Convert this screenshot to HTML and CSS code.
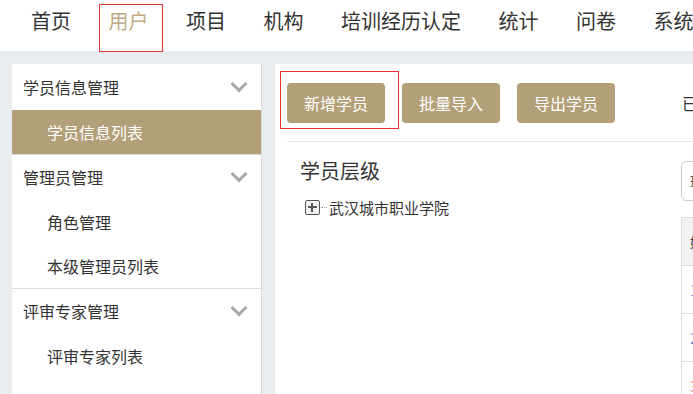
FILE: index.html
```html
<!DOCTYPE html>
<html lang="zh-CN">
<head>
    <meta charset="UTF-8">
    <meta name="viewport" content="width=device-width, initial-scale=1.0">
    <title>学员信息列表</title>
    <link rel="stylesheet" href="styles.css">
</head>
<body>
    <nav class="topnav">
        <a href="#">首页</a>
        <a href="#" class="current marked">用户</a>
        <a href="#">项目</a>
        <a href="#">机构</a>
        <a href="#">培训经历认定</a>
        <a href="#">统计</a>
        <a href="#">问卷</a>
        <a href="#">系统设置</a>
    </nav>

    <div class="layout">
        <aside class="sidebar">
            <div class="menu-group">
                <div class="menu-title">学员信息管理<span class="chevron"></span></div>
                <a href="#" class="menu-item active">学员信息列表</a>
            </div>
            <div class="menu-group">
                <div class="menu-title">管理员管理<span class="chevron"></span></div>
                <a href="#" class="menu-item">角色管理</a>
                <a href="#" class="menu-item">本级管理员列表</a>
            </div>
            <div class="menu-group">
                <div class="menu-title">评审专家管理<span class="chevron"></span></div>
                <a href="#" class="menu-item">评审专家列表</a>
            </div>
        </aside>

        <main class="main">
            <div class="toolbar">
                <button class="btn marked">新增学员</button>
                <button class="btn">批量导入</button>
                <button class="btn">导出学员</button>
                <span class="selected-info">已选择 0 名学员</span>
            </div>

            <div class="content">
                <section class="tree-panel">
                    <h2 class="panel-title">学员层级</h2>
                    <div class="tree-node">
                        <span class="toggle"></span>
                        <span class="connector"></span>
                        <span class="node-label">武汉城市职业学院</span>
                    </div>
                </section>

                <section class="list-panel">
                    <input type="text" class="search" placeholder="班级/姓名/身份证号">
                    <table class="student-table">
                        <thead>
                            <tr><th>姓名</th><th>性别</th><th>身份证号</th><th>所属机构</th></tr>
                        </thead>
                        <tbody>
                            <tr><td class="link">1</td><td>张三</td><td>男</td><td>武汉城市职业学院</td></tr>
                            <tr><td class="link">2</td><td>李四</td><td>女</td><td>武汉城市职业学院</td></tr>
                            <tr><td class="warn">3</td><td>王五</td><td>男</td><td>武汉城市职业学院</td></tr>
                        </tbody>
                    </table>
                </section>
            </div>
        </main>
    </div>
</body>
</html>
```

FILE: styles.css
```css
html, body {
    margin: 0;
    height: 100%;
}
body {
    background-color: #eaedf0;
    font-family: "Noto Sans CJK SC", "Noto Sans", sans-serif;
    color: #333;
    overflow: hidden;
}
a {
    text-decoration: none;
    color: inherit;
}

/* top navigation */
.topnav {
    display: flex;
    gap: 37.5px;
    height: 51px;
    box-sizing: border-box;
    padding: 3px 0 0 31px;
    background-color: #fff;
    white-space: nowrap;
}
.topnav a {
    flex-shrink: 0;
    font-size: 20px;
    line-height: 35px;
    color: #333;
}
.topnav a.current {
    color: #c2aa86;
}
.marked {
    position: relative;
}
.topnav a.marked::after {
    content: "";
    position: absolute;
    top: 1px;
    bottom: -1px;
    left: -10px;
    right: -14px;
    border: 1px solid #e8322f;
}

/* page layout */
.layout {
    display: flex;
    gap: 13px;
    padding: 13px 0 0 12px;
    height: calc(100% - 51px);
    box-sizing: border-box;
}
.sidebar {
    width: 249px;
    flex-shrink: 0;
    background-color: #fff;
    border-right: 1px solid #d6dade;
}
.menu-group {
    border-top: 1px solid #dcdcdc;
}
.menu-group:first-child {
    border-top-color: #fff;
}
.menu-title {
    display: flex;
    justify-content: space-between;
    align-items: center;
    height: 45px;
    box-sizing: border-box;
    padding: 0 12px 2px 11px;
    font-size: 16px;
}
.chevron {
    width: 9px;
    height: 9px;
    margin: -5px 4px 0 0;
    border-right: 3px solid #a8a8a8;
    border-bottom: 3px solid #a8a8a8;
    transform: rotate(45deg);
}
.menu-item {
    display: block;
    height: 44px;
    line-height: 44px;
    padding-left: 35px;
    font-size: 16px;
}
.menu-item.active {
    background-color: #b39f78;
    color: #fff;
}

/* main panel */
.main {
    flex: 1;
    min-width: 0;
    background-color: #fff;
}
.toolbar {
    display: flex;
    align-items: center;
    height: 77px;
    box-sizing: border-box;
    padding: 0 0 0 12px;
    white-space: nowrap;
}
.btn {
    flex-shrink: 0;
    width: 98px;
    height: 40px;
    margin: 0 17px 0 0;
    padding: 0;
    border: none;
    border-radius: 4px;
    background-color: #b39f78;
    color: #fff;
    font-family: inherit;
    font-size: 16px;
    cursor: pointer;
}
.btn.marked::after {
    content: "";
    position: absolute;
    top: -12px;
    bottom: -6px;
    left: -7px;
    right: -14px;
    border: 1px solid #e8322f;
}
.selected-info {
    flex-shrink: 0;
    margin-left: 50px;
    font-size: 16px;
}

.content {
    display: flex;
    margin-left: 12px;
    border-top: 1px solid #e5e5e5;
}
.tree-panel {
    width: 381px;
    flex-shrink: 0;
    padding: 17px 0 0 13px;
}
.panel-title {
    margin: 0;
    font-size: 20px;
    font-weight: normal;
    line-height: 24px;
}
.tree-node {
    display: flex;
    align-items: center;
    margin: 9px 0 0 5px;
    height: 30px;
    font-size: 15px;
}
.toggle {
    position: relative;
    width: 13px;
    height: 13px;
    border: 1px solid #555;
    border-radius: 2px;
    background-color: #f4f4f4;
}
.toggle::before,
.toggle::after {
    content: "";
    position: absolute;
    background-color: #555;
}
.toggle::before {
    left: 2px;
    right: 2px;
    top: 5px;
    height: 2px;
}
.toggle::after {
    top: 2px;
    bottom: 2px;
    left: 5px;
    width: 2px;
}
.connector {
    width: 6px;
    margin: 0 2px 0 1px;
    border-top: 1px dotted #999;
}

.list-panel {
    flex-shrink: 0;
    width: 420px;
}
.search {
    display: block;
    width: 300px;
    height: 40px;
    box-sizing: border-box;
    margin-top: 19px;
    padding: 0 8px;
    border: 1px solid #ccc;
    border-radius: 5px;
    font-family: inherit;
    font-size: 14px;
}
.search::placeholder {
    color: #555;
}
.student-table {
    margin-top: 16px;
    border-collapse: collapse;
    font-size: 14px;
}
.student-table th,
.student-table td {
    height: 47px;
    padding: 0 8px;
    border: 1px solid #ddd;
    text-align: left;
    white-space: nowrap;
}
.student-table th {
    background-color: #f2f2f2;
    font-weight: normal;
}
.student-table .link {
    color: #5b8fd6;
}
.student-table .warn {
    color: #e88a8a;
}
```
